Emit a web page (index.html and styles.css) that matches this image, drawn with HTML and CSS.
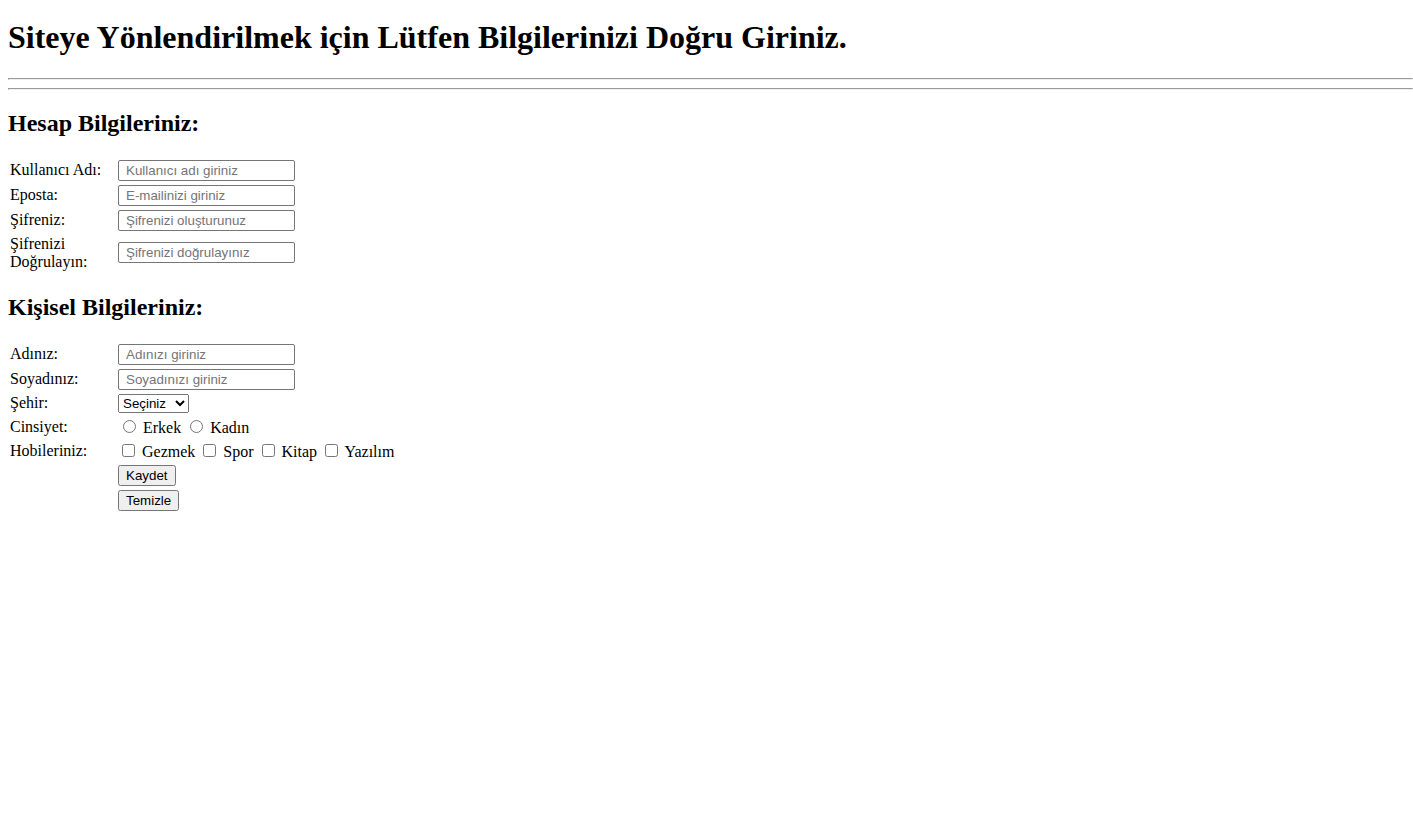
FILE: index.html
```html
<!DOCTYPE html>
<html lang="tr">
<head>
<meta charset="utf-8">
<title>Kayıt</title>
<link rel="stylesheet" href="styles.css">
</head>
<body class="page">
<h1 class="title">Siteye Yönlendirilmek için Lütfen Bilgilerinizi Doğru Giriniz.</h1>
<hr class="rule">
<hr class="rule">
<form class="form">
<h2 class="section">Hesap Bilgileriniz:</h2>
<table class="grid">
<tr><td class="label">Kullanıcı Adı:</td><td><input class="field" type="text" placeholder="Kullanıcı adı giriniz"></td></tr>
<tr><td class="label">Eposta:</td><td><input class="field" type="email" placeholder="E-mailinizi giriniz"></td></tr>
<tr><td class="label">Şifreniz:</td><td><input class="field" type="password" placeholder="Şifrenizi oluşturunuz"></td></tr>
<tr><td class="label">Şifrenizi<br>Doğrulayın:</td><td><input class="field" type="password" placeholder="Şifrenizi doğrulayınız"></td></tr>
</table>
<h2 class="section">Kişisel Bilgileriniz:</h2>
<table class="grid">
<tr><td class="label">Adınız:</td><td><input class="field" type="text" placeholder="Adınızı giriniz"></td></tr>
<tr><td class="label">Soyadınız:</td><td><input class="field" type="text" placeholder="Soyadınızı giriniz"></td></tr>
<tr><td class="label">Şehir:</td><td><select class="choice"><option>Seçiniz</option><option>İstanbul</option><option>Ankara</option><option>İzmir</option></select></td></tr>
<tr><td class="label">Cinsiyet:</td><td><input type="radio" name="g" class="radio"> Erkek <input type="radio" name="g" class="radio"> Kadın</td></tr>
<tr><td class="label">Hobileriniz:</td><td><input type="checkbox" class="check"> Gezmek <input type="checkbox" class="check"> Spor <input type="checkbox" class="check"> Kitap <input type="checkbox" class="check"> Yazılım</td></tr>
<tr><td></td><td><button type="submit" class="btn">Kaydet</button></td></tr>
<tr><td></td><td><button type="reset" class="btn">Temizle</button></td></tr>
</table>
</form>
</body>
</html>
```
FILE: styles.css
```css
.page {
  margin: 8px 0 8px 8px;
  font-family: "Liberation Serif", "Times New Roman", serif;
  font-size: 16px;
  color: #000;
  background: #fff;
}
.title {
  font-size: 32px;
  font-weight: bold;
  margin: 11.44px 0 21.44px;
}
.rule {
  margin: 8px 0;
  border-style: solid;
  border-width: 1px;
  border-color: #9a9a9a #eee #eee #9a9a9a;
}
.section {
  font-size: 24px;
  font-weight: bold;
  margin: 19.92px 0;
}
.grid {
  border-collapse: separate;
  border-spacing: 2px;
}
.grid td {
  padding: 1px 1px 1px 0;
  vertical-align: middle;
}
.label {
  width: 105px;
}
.field {
  font-family: "Liberation Sans", Arial, sans-serif;
  font-size: 13.333px;
  width: 177px;
  box-sizing: border-box;
  height: 21px;
  padding: 1px 7px;
  margin: 0;
  border: 1px solid #767676;
  border-radius: 2px;
}
.field::placeholder {
  color: #757575;
}
.choice {
  font-family: "Liberation Sans", Arial, sans-serif;
  font-size: 13.333px;
  width: 71px;
  margin: 0;
}
.btn {
  font-family: "Liberation Sans", Arial, sans-serif;
  font-size: 13.333px;
  margin: 0;
}
.radio {
  margin: 3px 3px 0 5px;
}
.check {
  margin: 3px 3px 3px 4px;
}
```
